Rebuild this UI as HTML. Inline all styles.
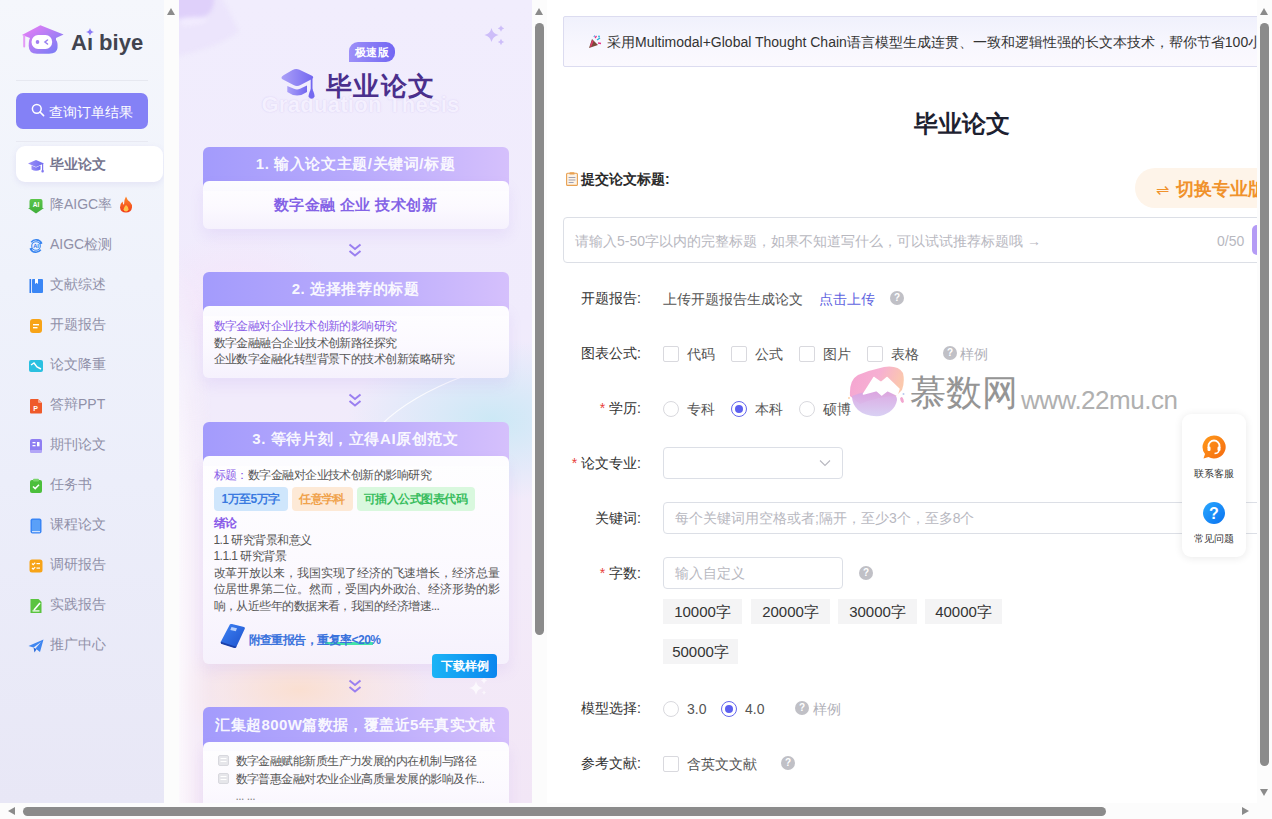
<!DOCTYPE html>
<html><head><meta charset="utf-8">
<style>
*{margin:0;padding:0;box-sizing:border-box}
html,body{width:1272px;height:819px;overflow:hidden;background:#fff;font-family:"Liberation Sans",sans-serif;color:#333}
.abs{position:absolute}
/* scrollbars */
.sbv{position:absolute;width:15px;background:#fcfcfc}
.thumb{position:absolute;background:#8b8b8b;border-radius:5px}
.arr{position:absolute;width:0;height:0}
.up{border-left:4.5px solid transparent;border-right:4.5px solid transparent;border-bottom:7px solid #8b8b8b}
.down{border-left:4.5px solid transparent;border-right:4.5px solid transparent;border-top:7px solid #8b8b8b}
.left{border-top:4.5px solid transparent;border-bottom:4.5px solid transparent;border-right:7px solid #8b8b8b}
.right{border-top:4.5px solid transparent;border-bottom:4.5px solid transparent;border-left:7px solid #8b8b8b}

/* sidebar */
#side{left:0;top:0;width:164px;height:803px;background:linear-gradient(180deg,#f5f7fc 0%,#eff2fb 35%,#eceefa 60%,#e8e7f6 100%)}
.mi{position:absolute;left:16px;width:147px;height:36px;font-size:14px;color:#9090a8;line-height:36px;padding-left:34px}
.mi svg{position:absolute;left:12px;top:12px;width:16px;height:16px}
.mi.act{background:#fff;border-radius:9px;box-shadow:0 2px 6px rgba(120,110,200,.12);color:#76768f;font-weight:bold}

/* middle panel */
#mid{left:179px;top:0;width:353px;height:803px;overflow:hidden;background:linear-gradient(180deg,#f1edfd 0%,#f0ebfc 40%,#f3ebf9 70%,#f2e6f6 100%)}
.card{position:absolute;left:23.5px;width:306px}
.ch{position:absolute;left:0;top:0;width:306px;height:44px;border-radius:6px 6px 0 0;background:linear-gradient(90deg,#a39bfc 0%,#b8aafc 50%,#d5c0fc 100%);color:rgba(255,255,255,.93);font-weight:bold;font-size:15px;text-align:center;line-height:34px;letter-spacing:0.6px}
.cb{position:absolute;left:0;width:306px;background:linear-gradient(180deg,rgba(255,255,255,.97) 0%,rgba(252,250,255,.95) 55%,rgba(246,242,253,.93) 100%);border-radius:6px;box-shadow:0 7px 14px rgba(165,125,230,.12)}
.chev{position:absolute;left:168px;width:16px;height:15px}

/* right */
#right{left:547px;top:0;width:710px;height:803px;overflow:hidden;background:#fff}
.lbl{position:absolute;width:94px;text-align:right;font-size:14px;color:#333;height:20px;line-height:20px}
.star{color:#e8413c;margin-right:4px}
.cbx{position:absolute;width:16px;height:16px;border:1px solid #d9d9de;border-radius:2px;background:#fff;margin-top:1px}
.rad{position:absolute;width:16px;height:16px;border:1px solid #d9d9de;border-radius:50%;background:#fff;margin-top:1px}
.rad.on{border-color:#6466ee}
.rad.on:after{content:"";position:absolute;left:3px;top:3px;width:8px;height:8px;border-radius:50%;background:#5c5ff0}
.t14{position:absolute;font-size:14px;color:#555;height:20px;line-height:20px;white-space:nowrap;margin-top:1px}
.q{position:absolute;width:14px;height:14px;border-radius:50%;background:#c0c0c6;color:#fff;font-size:10px;font-weight:bold;text-align:center;line-height:14px}
.inp{position:absolute;border:1px solid #dcdfe6;border-radius:4px;background:#fff}
.ph{position:absolute;font-size:14px;color:#b8b8bf;white-space:nowrap;line-height:20px;height:20px}
.tag{position:absolute;height:25px;background:#f4f4f5;font-size:15px;color:#333;line-height:25px;text-align:center}
</style></head>
<body>

<!-- SIDEBAR -->
<div id="side" class="abs">

<svg class="abs" style="left:16px;top:18px" width="60" height="40" viewBox="0 0 60 40">
<defs><linearGradient id="lg1" x1="0" y1="0" x2="1" y2="1"><stop offset="0" stop-color="#f07ff5"/><stop offset="1" stop-color="#6d7cf5"/></linearGradient></defs>
<path d="M6 17 L24.4 7.3 L47.6 16.4 L40 20 L40 22 Q42 24 41.5 30 Q41 35.7 33 35.7 L21 35.7 Q12.7 35.7 12.7 28 Q12.7 22 14 20 Z" fill="url(#lg1)"/>
<rect x="7.2" y="17" width="2" height="12.5" rx="1" fill="#e49af7"/>
<rect x="15.6" y="17" width="20.5" height="14" rx="6.5" fill="#fff"/>
<ellipse cx="21.5" cy="24" rx="1.8" ry="2" fill="#a07ef0"/>
<path d="M31.5 22 L29 24 L31.5 26" stroke="#9a82f0" stroke-width="1.6" fill="none" stroke-linecap="round"/>
</svg>
<div class="abs" style="left:71px;top:29px;font-size:22px;font-weight:bold;color:#41444f;letter-spacing:0px;line-height:28px">A&#305; biye</div>
<svg class="abs" style="left:86px;top:28px" width="8" height="8" viewBox="0 0 8 8"><path d="M4 0 Q4.6 3.4 8 4 Q4.6 4.6 4 8 Q3.4 4.6 0 4 Q3.4 3.4 4 0Z" fill="#8b7cf6"/></svg>
<div class="abs" style="left:16px;top:80px;width:132px;height:1px;background:#e6e8f0"></div>
<div class="abs" style="left:16px;top:93px;width:132px;height:36px;border-radius:7px;background:#8481f6;color:#fff;font-size:14px;line-height:38px;padding-left:33px">查询订单结果</div>
<svg class="abs" style="left:31px;top:103px" width="14" height="14" viewBox="0 0 14 14"><circle cx="5.8" cy="5.8" r="4.4" stroke="#fff" stroke-width="1.5" fill="none"/><path d="M9 9 L12.6 12.6" stroke="#fff" stroke-width="1.6" stroke-linecap="round"/></svg>
<div class="abs" style="left:16px;top:141px;width:132px;height:1px;background:#e8e9f2"></div>
<div class="mi act" style="top:146px"><svg viewBox="0 0 16 16"><defs><linearGradient id="ic0" x1="0" y1="0" x2="1" y2="0"><stop offset="0" stop-color="#9c8ff7"/><stop offset="1" stop-color="#6f6cf0"/></linearGradient></defs><path d="M0 5.5 L8 2 L16 5.5 L8 9 Z" fill="url(#ic0)"/><path d="M3.5 7.5 V11.5 Q8 14 12.5 11.5 V7.5 L8 9.5 Z" fill="url(#ic0)"/><rect x="14" y="6" width="1.2" height="7" fill="#7f75f0"/><rect x="13.4" y="12" width="2.4" height="2.5" rx="1" fill="#7f75f0"/></svg>毕业论文</div>
<div class="mi" style="top:186px"><svg viewBox="0 0 16 16"><defs><linearGradient id="gAI" x1="0" y1="0" x2="0" y2="1"><stop offset="0" stop-color="#5cc54a"/><stop offset="1" stop-color="#3fae3a"/></linearGradient></defs><path d="M3.5 1 h9 q2 0 2 2 v7 h1.5 l-8 5.5 l-8 -5.5 h1.5 v-7 q0 -2 2 -2z" fill="url(#gAI)"/><text x="8" y="8.6" font-size="6.5" font-weight="bold" fill="#fff" text-anchor="middle" font-family="Liberation Sans">AI</text></svg>降AIGC率<svg style="left:103px;top:10px;width:14px;height:17px" viewBox="0 0 14 17"><defs><linearGradient id="fire" x1="0" y1="0" x2="0" y2="1"><stop offset="0" stop-color="#ff8a2a"/><stop offset="1" stop-color="#f03a1a"/></linearGradient></defs><path d="M7 0.5 Q8 4 11 6 Q13.5 8.5 13 11.5 Q12.3 16.5 7 16.5 Q1.5 16.5 1 11.5 Q0.8 8 3.5 5.5 Q3.8 8 5 8.8 Q4.8 4 7 0.5Z" fill="url(#fire)"/><path d="M7 9 Q9.8 11 9.5 13.3 Q9 15.5 7 15.5 Q4.8 15.5 4.5 13.5 Q4.5 11.5 7 9Z" fill="#ffc24a"/></svg></div>
<div class="mi" style="top:226px"><svg viewBox="0 0 16 16"><path d="M3.2 4.2 A6.2 6.2 0 0 1 13.6 5.2" stroke="#3a86f0" stroke-width="1.6" fill="none"/><path d="M12.8 11.8 A6.2 6.2 0 0 1 2.4 10.8" stroke="#3a86f0" stroke-width="1.6" fill="none"/><path d="M12 3.2 L14.6 5.6 L11.4 6.4Z" fill="#3a86f0"/><path d="M4 12.8 L1.4 10.4 L4.6 9.6Z" fill="#3a86f0"/><circle cx="8" cy="8" r="4.3" fill="#eaf3ff" stroke="#3a86f0" stroke-width="1.1"/><text x="8" y="10.1" font-size="5.6" font-weight="bold" fill="#2a76e8" text-anchor="middle" font-family="Liberation Sans">AI</text></svg>AIGC检测</div>
<div class="mi" style="top:266px"><svg viewBox="0 0 16 16"><rect x="1.5" y="1" width="1.6" height="14" fill="#2f7af0"/><rect x="4" y="1" width="11" height="14" rx="1" fill="#3a86f5"/><path d="M7 1 v5 l1.5 -1.2 l1.5 1.2 v-5z" fill="#fff"/></svg>文献综述</div>
<div class="mi" style="top:306px"><svg viewBox="0 0 16 16"><rect x="2" y="1" width="12" height="14" rx="3" fill="#f7a418"/><rect x="5" y="6" width="6" height="1.4" fill="#fff"/><rect x="5" y="9" width="4.5" height="1.4" fill="#fff"/></svg>开题报告</div>
<div class="mi" style="top:346px"><svg viewBox="0 0 16 16"><rect x="1" y="2" width="14" height="12" rx="2" fill="#2ac0e0"/><path d="M3 7 L6 5 L9 9 L13 11" stroke="#fff" stroke-width="1.4" fill="none"/></svg>论文降重</div>
<div class="mi" style="top:386px"><svg viewBox="0 0 16 16"><path d="M3 1 h7 l4 4 v9.5 q0 1 -1 1 h-10 q-1 0 -1 -1 v-12.5 q0 -1 1 -1z" fill="#ef5a2a"/><path d="M10 1 l4 4 h-3 q-1 0 -1 -1z" fill="#f7a38a"/><text x="7.5" y="12.5" font-size="7" font-weight="bold" fill="#fff" text-anchor="middle" font-family="Liberation Sans">P</text></svg>答辩PPT</div>
<div class="mi" style="top:426px"><svg viewBox="0 0 16 16"><rect x="2" y="1" width="12" height="13" rx="2" fill="#8f7ef2"/><rect x="2" y="12" width="12" height="3" rx="1.2" fill="#b2a6f7"/><rect x="4.5" y="4" width="3" height="1.3" fill="#fff"/><rect x="4.5" y="7" width="3" height="1.3" fill="#fff"/><rect x="9" y="4" width="2.5" height="4.3" fill="#fff"/></svg>期刊论文</div>
<div class="mi" style="top:466px"><svg viewBox="0 0 16 16"><rect x="2" y="2" width="12" height="13" rx="2" fill="#4cbf3c"/><rect x="5" y="0.8" width="6" height="2.6" rx="1" fill="#7ad46b"/><path d="M5 8.5 L7.2 10.6 L11 6.8" stroke="#fff" stroke-width="1.5" fill="none"/></svg>任务书</div>
<div class="mi" style="top:506px"><svg viewBox="0 0 16 16"><rect x="2.5" y="0.5" width="11" height="15" rx="2" fill="#3a86f5"/><rect x="4" y="2" width="8" height="11" rx="1" fill="#5aa0f8"/><rect x="4" y="13" width="8" height="1.2" fill="#cfe2fd"/></svg>课程论文</div>
<div class="mi" style="top:546px"><svg viewBox="0 0 16 16"><rect x="1.5" y="1.5" width="13" height="13" rx="2.5" fill="#f7a418"/><path d="M4 5.5 l1.2 1.2 l2 -2" stroke="#fff" stroke-width="1.2" fill="none"/><path d="M4 10 l1.2 1.2 l2 -2" stroke="#fff" stroke-width="1.2" fill="none"/><rect x="8.5" y="5" width="3.5" height="1.2" fill="#fff"/><rect x="8.5" y="9.5" width="3.5" height="1.2" fill="#fff"/></svg>调研报告</div>
<div class="mi" style="top:586px"><svg viewBox="0 0 16 16"><path d="M2.5 1 h8 l3 3 v11 h-11z" fill="#5ac43f"/><path d="M6 12 L12 5" stroke="#fff" stroke-width="1.6"/><rect x="4.5" y="12.3" width="7" height="1.2" fill="#fff"/></svg>实践报告</div>
<div class="mi" style="top:626px"><svg viewBox="0 0 16 16"><path d="M0.5 8 L15.5 1.5 L12 14 L7.5 10.5 L13 4 L5.5 9.5 Z" fill="#3f86f0"/><path d="M5.5 9.5 L6.5 14.5 L8.5 11.3z" fill="#2a6ad8"/></svg>推广中心</div>
</div>
<div class="sbv" style="left:164px;top:0;height:803px"></div>
<div class="arr up" style="left:167px;top:8px"></div>

<!-- MIDDLE PANEL -->
<div id="mid" class="abs">

<!-- decorations -->
<svg class="abs" style="left:-10px;top:-10px;filter:blur(2px)" width="100" height="90" viewBox="-10 -10 100 90"><path d="M-10 -10 L38 -10 Q50 10 60 32 Q40 45 15 52 L-10 58Z" fill="rgba(232,222,252,.5)"/><path d="M-10 -10 L34 -10 Q38 10 26 16 Q12 20 -10 18Z" fill="rgba(218,200,250,.75)"/><path d="M2 18 Q18 14 30 20 Q20 26 2 26Z" fill="rgba(245,240,255,.6)"/></svg>
<div class="abs" style="left:170px;top:340px;width:220px;height:160px;background:radial-gradient(ellipse at 65% 50%,rgba(200,232,245,.9) 0%,rgba(212,232,248,.45) 45%,rgba(240,235,253,0) 72%)"></div>
<div class="abs" style="left:-10px;top:630px;width:260px;height:120px;background:radial-gradient(ellipse at 50% 50%,rgba(251,222,205,.9) 0%,rgba(250,228,222,.55) 40%,rgba(246,236,246,0) 72%)"></div>
<div class="abs" style="left:-40px;top:230px;width:200px;height:140px;background:radial-gradient(ellipse at 50% 50%,rgba(248,225,248,.6) 0%,rgba(240,235,253,0) 70%)"></div>
<svg class="abs" style="left:0;top:0" width="353" height="803" viewBox="0 0 353 803">
<path d="M203 424 Q232 396 285 376" stroke="rgba(255,255,255,.85)" stroke-width="1.2" fill="none"/>
<path d="M312.5 28 Q313.76 33.74 319.5 35 Q313.76 36.26 312.5 42 Q311.24 36.26 305.5 35 Q311.24 33.74 312.5 28Z" fill="#cdbdf9"/>
<path d="M322 25.3 Q322.576 27.924 325.2 28.5 Q322.576 29.076 322 31.7 Q321.424 29.076 318.8 28.5 Q321.424 27.924 322 25.3Z" fill="#cdbdf9"/>
<path d="M322 38.8 Q322.576 41.424 325.2 42 Q322.576 42.576 322 45.2 Q321.424 42.576 318.8 42 Q321.424 41.424 322 38.8Z" fill="#cdbdf9"/>
<path d="M297 681 Q298 687 304 688 Q298 689 297 695 Q296 689 290 688 Q296 687 297 681Z" fill="rgba(255,255,255,.7)"/>
<path d="M305 677 Q305.5 680 308 680.5 Q305.5 681 305 684 Q304.5 681 302 680.5 Q304.5 680 305 677Z" fill="rgba(255,255,255,.7)"/><path d="M305 690 Q305.4 692 307 692.5 Q305.4 693 305 695 Q304.6 693 303 692.5 Q304.6 692 305 690Z" fill="rgba(255,255,255,.6)"/>
</svg>
<div class="abs" style="left:0;top:250px;width:34px;height:553px;background:linear-gradient(90deg,rgba(254,252,254,.8) 0%,rgba(252,246,251,.55) 35%,rgba(250,240,248,.25) 70%,rgba(255,255,255,0) 100%);-webkit-mask-image:linear-gradient(180deg,transparent 0%,#000 45%,#000 100%)"></div>
<!-- header -->
<div class="abs" style="left:170px;top:42px;width:46px;height:20px;border-radius:9px 9px 9px 0;background:linear-gradient(90deg,#9d90f8,#7266f3);color:#fff;font-size:11px;font-weight:bold;line-height:20px;text-align:center;letter-spacing:0.3px">极速版</div>
<div class="abs" style="left:55px;top:92px;width:253px;text-align:center;font-size:22px;font-weight:bold;color:#f4f0fe;text-shadow:0 0 1.5px rgba(190,170,235,.55);line-height:26px;letter-spacing:0.3px">Graduation Thesis</div>
<svg class="abs" style="left:96px;top:62px" width="50" height="40" viewBox="275 62 50 40"><defs><linearGradient id="capg" x1="0" y1="0" x2="1" y2="0"><stop offset="0" stop-color="#aba0f8"/><stop offset="1" stop-color="#7367f0"/></linearGradient></defs><path d="M282 79 Q280.5 77 283.5 75.2 L292.5 70 Q296 68 299.5 69.8 L312 75.8 Q314.5 77.3 312 79 L300.5 85 Q297 86.8 293.5 85 Z" fill="url(#capg)"/><path d="M287.3 86 L294 88.8 Q297 90 300 88.8 L307 85.6 V92 Q297 99 287.3 92 Z" fill="url(#capg)"/><rect x="310.7" y="77" width="1.8" height="13" fill="#7468f0"/><path d="M311.6 87.5 Q308.2 94.5 308.6 96.5 Q309.5 98.8 311.6 98.8 Q313.7 98.8 314.5 96.5 Q315 94.5 311.6 87.5Z" fill="#7468f0"/></svg>
<div class="abs" style="left:147px;top:70px;font-size:26px;font-weight:900;color:#4a2f8c;line-height:32px;letter-spacing:1.4px">毕业论文</div>

<!-- card 1 -->
<div class="card" style="top:147px;height:82px">
 <div class="ch">1. 输入论文主题/关键词/标题</div>
 <div class="cb" style="top:34px;height:48px;text-align:center;line-height:48px;font-size:15px;font-weight:bold;color:#8463e6;letter-spacing:0.4px">数字金融 企业 技术创新</div>
</div>
<svg class="chev" style="top:243px" viewBox="0 0 16 15"><path d="M2.5 1.5 L8 6 L13.5 1.5" stroke="#9a7ff0" stroke-width="2" fill="none"/><path d="M2.5 8 L8 12.5 L13.5 8" stroke="#9a7ff0" stroke-width="2" fill="none"/></svg>

<!-- card 2 -->
<div class="card" style="top:272px;height:106px">
 <div class="ch">2. 选择推荐的标题</div>
 <div class="cb" style="top:34px;height:72px;padding:12px 0 0 11px;font-size:12px;letter-spacing:-0.55px;line-height:16.5px;color:#555">
  <div style="color:#8a5de8">数字金融对企业技术创新的影响研究</div>
  <div>数字金融融合企业技术创新路径探究</div>
  <div>企业数字金融化转型背景下的技术创新策略研究</div>
 </div>
</div>
<svg class="chev" style="top:393px" viewBox="0 0 16 15"><path d="M2.5 1.5 L8 6 L13.5 1.5" stroke="#9a7ff0" stroke-width="2" fill="none"/><path d="M2.5 8 L8 12.5 L13.5 8" stroke="#9a7ff0" stroke-width="2" fill="none"/></svg>

<!-- card 3 -->
<div class="card" style="top:422px;height:242px">
 <div class="ch">3. 等待片刻，立得AI原创范文</div>
 <div class="cb" style="top:34px;height:208px;font-size:12px;letter-spacing:-0.55px;color:#555">
  <div class="abs" style="left:11px;top:11px;line-height:16px"><span style="color:#8a5de8">标题：</span>数字金融对企业技术创新的影响研究</div>
  <div class="abs" style="left:11px;top:31px;width:74px;height:24px;border-radius:4px;background:#cfe6fc;color:#3a7ae0;font-weight:bold;text-align:center;line-height:24px">1万至5万字</div>
  <div class="abs" style="left:89px;top:31px;width:61px;height:24px;border-radius:4px;background:#fde9d6;color:#f0a24c;font-weight:bold;text-align:center;line-height:24px">任意学科</div>
  <div class="abs" style="left:154px;top:31px;width:118px;height:24px;border-radius:4px;background:#d9f8de;color:#3abd5e;font-weight:bold;text-align:center;line-height:24px">可插入公式图表代码</div>
  <div class="abs" style="left:11px;top:59px;line-height:16.5px;width:286px;text-align:justify">
   <div style="color:#8a5de8;font-weight:bold">绪论</div>
   <div>1.1 研究背景和意义</div>
   <div>1.1.1 研究背景</div>
   <div>改革开放以来，我国实现了经济的飞速增长，经济总量位居世界第二位。然而，受国内外政治、经济形势的影响，从近些年的数据来看，我国的经济增速...</div>
  </div>
  <svg class="abs" style="left:14px;top:166px" width="30" height="28" viewBox="0 0 30 28"><defs><linearGradient id="bk" x1="0" y1="0" x2="1" y2="1"><stop offset="0" stop-color="#3f84f5"/><stop offset="1" stop-color="#1c50cc"/></linearGradient></defs><path d="M13 2.2 Q14 1.8 15 2 L27 5 Q28.4 5.5 27.8 6.8 L19.5 24.5 Q19 25.8 17.6 25.4 L4.5 21.5 Q3.2 21 3.8 19.8Z" fill="url(#bk)"/><path d="M3.8 19.8 L17.6 24.2 L19.5 24.5 L19 25.8 L17.2 26 L4 21.8Z" fill="#1a3fa8"/><path d="M14.5 5 L20 6.2 L18.8 9.2 L13.3 8Z" fill="#b8d0fb"/></svg>
  <div class="abs" style="left:46px;top:178px;width:48px;height:3px;background:#45e3a8;left:122px;top:186px"></div>
  <div class="abs" style="left:46px;top:176px;font-size:12px;font-weight:bold;color:#3a72dc;line-height:16px">附查重报告，重复率&lt;20%</div>
 </div>
</div>
<div class="abs" style="left:253px;top:654px;width:65px;height:24px;border-radius:4px;background:linear-gradient(90deg,#1cb4f6,#0a86ee);color:#fff;font-size:12px;font-weight:bold;text-align:center;line-height:24px">下载样例</div>
<svg class="chev" style="top:679px" viewBox="0 0 16 15"><path d="M2.5 1.5 L8 6 L13.5 1.5" stroke="#9a7ff0" stroke-width="2" fill="none"/><path d="M2.5 8 L8 12.5 L13.5 8" stroke="#9a7ff0" stroke-width="2" fill="none"/></svg>

<!-- card 4 -->
<div class="card" style="top:707px;height:110px">
 <div class="ch" style="font-size:15px;letter-spacing:0.4px;line-height:36px">汇集超800W篇数据，覆盖近5年真实文献</div>
 <div class="cb" style="top:35px;height:90px;font-size:12px;letter-spacing:-0.55px;color:#555;line-height:17.5px;padding:11px 0 0 33px">
  <div>数字金融赋能新质生产力发展的内在机制与路径</div>
  <div>数字普惠金融对农业企业高质量发展的影响及作...</div>
  <div style="color:#888">... ...</div>
  <svg class="abs" style="left:15px;top:13px" width="11" height="11" viewBox="0 0 11 11"><rect x="0.5" y="0.5" width="10" height="10" rx="1.5" fill="#e6e6ea" stroke="#d8d8de"/><rect x="2.5" y="3" width="6" height="1" fill="#fff"/><rect x="2.5" y="6" width="6" height="1" fill="#fff"/></svg>
  <svg class="abs" style="left:15px;top:31px" width="11" height="11" viewBox="0 0 11 11"><rect x="0.5" y="0.5" width="10" height="10" rx="1.5" fill="#e6e6ea" stroke="#d8d8de"/><rect x="2.5" y="3" width="6" height="1" fill="#fff"/><rect x="2.5" y="6" width="6" height="1" fill="#fff"/></svg>
 </div>
</div>
</div>
<div class="sbv" style="left:532px;top:0;height:803px"></div>
<div class="arr up" style="left:535px;top:8px"></div>
<div class="thumb" style="left:535px;top:23px;width:9px;height:612px"></div>

<!-- RIGHT -->
<div id="right" class="abs">

<div class="abs" style="left:16px;top:16px;width:720px;height:51px;border:1px solid #dcdcf0;border-radius:2px;background:linear-gradient(180deg,#f0f1fc 0%,#f8f7fe 60%,#fbf9fe 100%)"></div>
<svg class="abs" style="left:41px;top:35px" width="14" height="14" viewBox="0 0 14 14"><path d="M1 13 L4 4 L10 10 Z" fill="#7a4a3a"/><path d="M2 11 L4.2 5 L5.5 6.3 L3 12.3Z" fill="#e03a6a"/><path d="M7 3 L8.5 1" stroke="#e8308a" stroke-width="1.3"/><path d="M9 5 L12 3" stroke="#2ab0d8" stroke-width="1.3"/><path d="M10 8 L13 8.5" stroke="#e8308a" stroke-width="1.3"/><circle cx="11" cy="1.5" r="0.9" fill="#2ab0d8"/><path d="M6 2 L6.5 0.5" stroke="#2a9ad8" stroke-width="1"/></svg>
<div class="abs" style="left:60px;top:32px;font-size:14px;color:#333;line-height:20px;white-space:nowrap">采用Multimodal+Global Thought Chain语言模型生成连贯、一致和逻辑性强的长文本技术，帮你节省100小时写作时间</div>

<div class="abs" style="left:367px;top:109px;font-size:24px;font-weight:bold;color:#1d2130;line-height:30px">毕业论文</div>

<svg class="abs" style="left:19px;top:172px" width="12" height="14" viewBox="0 0 12 14"><rect x="0.6" y="1.2" width="10.8" height="12.2" rx="1" fill="#fdf3e6" stroke="#e8a050" stroke-width="1.1"/><rect x="3.5" y="0.3" width="5" height="2.2" rx="0.6" fill="#e8a050"/><rect x="2.6" y="5" width="6.8" height="1" fill="#a0a0b0"/><rect x="2.6" y="7.5" width="6.8" height="1" fill="#a0a0b0"/><rect x="2.6" y="10" width="5" height="1" fill="#a0a0b0"/></svg>
<div class="abs" style="left:34px;top:169px;font-size:14px;font-weight:bold;color:#2a2a2a;line-height:20px">提交论文标题:</div>

<div class="abs" style="left:588px;top:168px;width:160px;height:40px;border-radius:20px;background:#fef4e9"></div>
<div class="abs" style="left:609px;top:178px;font-size:18px;font-weight:bold;color:#f0922c;line-height:22px;white-space:nowrap"><span style="font-weight:normal;font-size:16px;margin-right:7px">&#8652;</span>切换专业版</div>

<div class="inp" style="left:16px;top:217px;width:720px;height:46px"></div>
<div class="ph" style="left:28px;top:231px">请输入5-50字以内的完整标题，如果不知道写什么，可以试试推荐标题哦 →</div>
<div class="ph" style="left:670px;top:231px">0/50</div>
<div class="abs" style="left:705px;top:225px;width:30px;height:30px;border-radius:5px;background:#b49bf5"></div>

<!-- row 开题报告 -->
<div class="lbl" style="left:0px;top:288px">开题报告:</div>
<div class="t14" style="left:116px;top:288px">上传开题报告生成论文</div>
<div class="t14" style="left:272px;top:288px;color:#5e63df">点击上传</div>
<div class="q" style="left:343px;top:291px">?</div>

<!-- row 图表公式 -->
<div class="lbl" style="left:0px;top:343px">图表公式:</div>
<div class="cbx" style="left:116px;top:345px"></div><div class="t14" style="left:140px;top:343px">代码</div>
<div class="cbx" style="left:184px;top:345px"></div><div class="t14" style="left:208px;top:343px">公式</div>
<div class="cbx" style="left:252px;top:345px"></div><div class="t14" style="left:276px;top:343px">图片</div>
<div class="cbx" style="left:320px;top:345px"></div><div class="t14" style="left:344px;top:343px">表格</div>
<div class="q" style="left:396px;top:346px">?</div><div class="t14" style="left:413px;top:343px;color:#b0b0b8">样例</div>

<!-- row 学历 -->
<div class="lbl" style="left:0px;top:398px"><span class="star">*</span>学历:</div>
<div class="rad" style="left:116px;top:400px"></div><div class="t14" style="left:140px;top:398px">专科</div>
<div class="rad on" style="left:184px;top:400px"></div><div class="t14" style="left:208px;top:398px">本科</div>
<div class="rad" style="left:252px;top:400px"></div><div class="t14" style="left:276px;top:398px">硕博</div>

<!-- row 论文专业 -->
<div class="lbl" style="left:0px;top:453px"><span class="star">*</span>论文专业:</div>
<div class="inp" style="left:116px;top:447px;width:180px;height:32px"></div>
<svg class="abs" style="left:272px;top:459px" width="12" height="8" viewBox="0 0 12 8"><path d="M1 1.5 L6 6.5 L11 1.5" stroke="#b8b8c0" stroke-width="1.1" fill="none"/></svg>

<!-- row 关键词 -->
<div class="lbl" style="left:0px;top:508px">关键词:</div>
<div class="inp" style="left:116px;top:502px;width:620px;height:32px"></div>
<div class="ph" style="left:128px;top:508px">每个关键词用空格或者;隔开，至少3个，至多8个</div>

<!-- row 字数 -->
<div class="lbl" style="left:0px;top:563px"><span class="star">*</span>字数:</div>
<div class="inp" style="left:116px;top:557px;width:180px;height:32px"></div>
<div class="ph" style="left:128px;top:563px">输入自定义</div>
<div class="q" style="left:312px;top:566px">?</div>
<div class="tag" style="left:116px;top:599px;width:79px">10000字</div>
<div class="tag" style="left:204px;top:599px;width:79px">20000字</div>
<div class="tag" style="left:291px;top:599px;width:79px">30000字</div>
<div class="tag" style="left:378px;top:599px;width:77px">40000字</div>
<div class="tag" style="left:116px;top:639px;width:75px">50000字</div>

<!-- row 模型选择 -->
<div class="lbl" style="left:0px;top:698px">模型选择:</div>
<div class="rad" style="left:116px;top:700px"></div><div class="t14" style="left:140px;top:698px">3.0</div>
<div class="rad on" style="left:174px;top:700px"></div><div class="t14" style="left:198px;top:698px">4.0</div>
<div class="q" style="left:248px;top:701px">?</div><div class="t14" style="left:266px;top:698px;color:#b0b0b8">样例</div>

<!-- row 参考文献 -->
<div class="lbl" style="left:0px;top:753px">参考文献:</div>
<div class="cbx" style="left:116px;top:755px"></div><div class="t14" style="left:140px;top:753px">含英文文献</div>
<div class="q" style="left:234px;top:756px">?</div>

<!-- watermark -->
<svg class="abs" style="left:301px;top:364px;filter:blur(0.4px)" width="60" height="56" viewBox="848 364 60 56">
<defs>
<linearGradient id="wmA" x1="0" y1="0" x2="1" y2="0.3"><stop offset="0" stop-color="#f49ccd"/><stop offset=".55" stop-color="#f6a9cf"/><stop offset="1" stop-color="#fbc4a6"/></linearGradient>
<linearGradient id="wmB" x1="0" y1="0" x2="0" y2="1"><stop offset="0" stop-color="#d9a0e0"/><stop offset="1" stop-color="#d6cdf3"/></linearGradient>
</defs>
<path d="M850 396 Q849 380 858 375 Q870 370 884 367 Q898 365 903 373 Q905 382 902 390 L896 396 Q880 396 860 404 Z" fill="url(#wmA)" opacity=".92"/>
<path d="M852 396 Q866 390 884 390 Q897 392 897 400 Q895 412 880 416 Q866 417 858 410 Q852 404 852 396Z" fill="url(#wmB)" opacity=".92"/>
<path d="M863.5 394 L874 377.5 L881 382.5 L887 377.5 L899 389 L897 395 L887.6 390.5 L881.7 395 L876.6 390.5 Z" fill="#fff" stroke="#fff" stroke-width="1.5" stroke-linejoin="round"/>
<ellipse cx="902" cy="400" rx="1.6" ry="3" fill="#f2a6cf" transform="rotate(-20 902 400)"/>
<circle cx="903.5" cy="394" r="1" fill="#b9c8ee"/>
<circle cx="849" cy="398" r="1" fill="#fbd0a8"/>
</svg>
<div class="abs" style="left:363px;top:373px;font-size:36px;color:#959595;line-height:40px;font-weight:200">慕数网</div>
<div class="abs" style="left:474px;top:384px;font-size:26px;color:#b0b0b0;line-height:32px;letter-spacing:-0.5px">www.22mu.cn</div>

<!-- floating widget -->
<div class="abs" style="left:635px;top:414px;width:64px;height:143px;border-radius:9px;background:#fff;box-shadow:0 1px 8px rgba(0,0,0,.09)"></div>
<svg class="abs" style="left:655px;top:435px" width="24" height="24" viewBox="0 0 24 24"><defs><linearGradient id="og" x1="0" y1="0" x2="1" y2="1"><stop offset="0" stop-color="#ff9a1a"/><stop offset="1" stop-color="#f56a10"/></linearGradient></defs><path d="M12 0.5 A11.5 11.5 0 1 1 6.5 22 L1.5 23.5 L3 19 A11.5 11.5 0 0 1 12 0.5Z" fill="url(#og)"/><path d="M6.5 13 V11 A5.5 5.5 0 0 1 17.5 11 V13" stroke="#fff" stroke-width="1.8" fill="none"/><rect x="5.5" y="11.5" width="3" height="4.5" rx="1.2" fill="#fff"/><rect x="15.5" y="11.5" width="3" height="4.5" rx="1.2" fill="#fff"/><path d="M17 16 Q16 18.5 12.5 18.5" stroke="#fff" stroke-width="1.3" fill="none"/></svg>
<div class="abs" style="left:635px;top:467px;width:64px;text-align:center;font-size:10px;color:#333;line-height:14px">联系客服</div>
<svg class="abs" style="left:656px;top:502px" width="22" height="22" viewBox="0 0 22 22"><defs><linearGradient id="bg2" x1="0" y1="0" x2="1" y2="1"><stop offset="0" stop-color="#29a8ff"/><stop offset="1" stop-color="#0a72f0"/></linearGradient></defs><circle cx="11" cy="11" r="11" fill="url(#bg2)"/><text x="11" y="17" font-size="16" font-weight="bold" fill="#fff" text-anchor="middle" font-family="Liberation Sans">?</text></svg>
<div class="abs" style="left:635px;top:532px;width:64px;text-align:center;font-size:10px;color:#333;line-height:14px">常见问题</div>
</div>
<div class="sbv" style="left:1257px;top:0;height:803px"></div>
<div class="arr up" style="left:1260px;top:8px"></div>
<div class="thumb" style="left:1260px;top:23px;width:9px;height:743px"></div>
<div class="arr down" style="left:1260px;top:789px"></div>

<!-- HORIZONTAL SCROLLBAR -->
<div class="abs" style="left:0;top:803px;width:1272px;height:16px;background:#fcfcfc"></div>
<div class="arr left" style="left:8px;top:807px"></div>
<div class="thumb" style="left:23px;top:807px;width:1083px;height:9px"></div>
<div class="arr right" style="left:1242px;top:807px"></div>

</body></html>
